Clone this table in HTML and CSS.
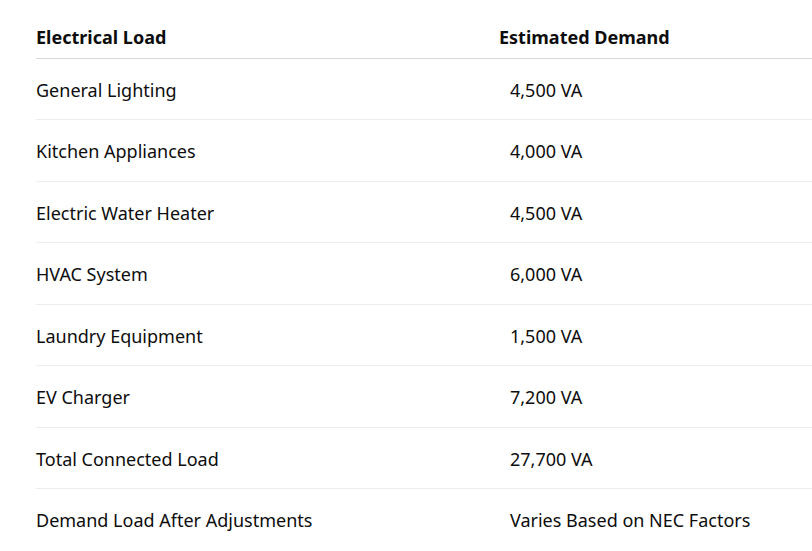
FILE: index.html
```html
<!DOCTYPE html>
<html>
<head>
<meta charset="utf-8">
<link rel="stylesheet" href="styles.css">
</head>
<body>
<div class="wrap">
<table class="loads">
<thead>
<tr><th class="c1">Electrical Load</th><th class="c2">Estimated Demand</th></tr>
</thead>
<tbody>
<tr><td class="c1">General Lighting</td><td class="c2">4,500 VA</td></tr>
<tr><td class="c1">Kitchen Appliances</td><td class="c2">4,000 VA</td></tr>
<tr><td class="c1">Electric Water Heater</td><td class="c2">4,500 VA</td></tr>
<tr><td class="c1">HVAC System</td><td class="c2">6,000 VA</td></tr>
<tr><td class="c1">Laundry Equipment</td><td class="c2">1,500 VA</td></tr>
<tr><td class="c1">EV Charger</td><td class="c2">7,200 VA</td></tr>
<tr><td class="c1">Total Connected Load</td><td class="c2">27,700 VA</td></tr>
<tr><td class="c1">Demand Load After Adjustments</td><td class="c2">Varies Based on NEC Factors</td></tr>
</tbody>
</table>
</div>
</body>
</html>
```
FILE: styles.css
```css
html, body {
  margin: 0;
  padding: 0;
  background: #ffffff;
}
body {
  font-family: "Noto Sans", "Open Sans", sans-serif;
  color: #0d0d0d;
  overflow: hidden;
}
.wrap {
  padding: 17px 0 0 36px;
}
.loads {
  border-collapse: collapse;
  width: 100%;
  font-size: 18px;
  line-height: 24px;
}
.loads th {
  text-align: left;
  font-weight: 700;
  padding: 8px 0 9px 0;
  border-bottom: 1px solid #d9d9d9;
}
.loads td {
  padding: 19px 0 17px 0;
  border-bottom: 1px solid #ececec;
}
.loads tbody tr:nth-child(even) td {
  padding-bottom: 18px;
}
.loads tbody tr:last-child td {
  border-bottom: none;
}
.loads .c1 {
  width: 463px;
}
.loads td.c2 {
  padding-left: 11px;
}
```
